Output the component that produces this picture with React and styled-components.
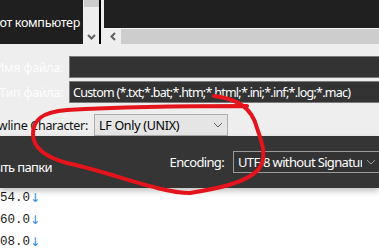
import React from 'react';
import styled, { createGlobalStyle } from 'styled-components';

const GlobalStyle = createGlobalStyle`
  html, body {
    margin: 0;
    padding: 0;
    background: #ffffff;
  }
  body {
    font-family: 'Noto Sans', 'Liberation Sans', sans-serif;
    letter-spacing: -0.3px;
  }
`;

const Page = styled.div`
  position: relative;
  width: 379px;
  height: 252px;
  overflow: hidden;
  display: flex;
  flex-direction: column;
  background: #eeeeee;
`;

const TopStrip = styled.div`
  display: flex;
  height: 44px;
  flex-shrink: 0;
`;

const TreePane = styled.div`
  width: 83px;
  background: #1f1f1f;
  display: flex;
  justify-content: flex-end;
  align-items: center;
  padding-right: 3px;
  box-sizing: border-box;
  overflow: hidden;
  color: #ffffff;
  font-size: 12.5px;
  white-space: nowrap;
`;

const VScroll = styled.div`
  width: 16px;
  background: #efefef;
  display: flex;
  flex-direction: column;
  justify-content: space-between;
  align-items: center;
`;

const VThumb = styled.div`
  width: 15px;
  height: 7px;
  background: #cdcdcd;
`;

const ScrollArrow = styled.svg`
  display: block;
  margin-bottom: 4px;
`;

const Divider = styled.div`
  width: 2px;
  background: #000000;
  margin-right: 3px;
`;

const ListPane = styled.div`
  flex: 1;
  display: flex;
  flex-direction: column;
`;

const ListBody = styled.div`
  height: 28px;
  background: #202020;
  border-bottom: 1px solid #f4f4f4;
`;

const HScroll = styled.div`
  flex: 1;
  display: flex;
  align-items: center;
  background: #efefef;
`;

const HArrowCell = styled.div`
  width: 17px;
  display: flex;
  justify-content: center;
`;

const HThumb = styled.div`
  flex: 1;
  align-self: stretch;
  background: #cdcdcd;
`;

const Form = styled.div`
  display: flex;
  flex-direction: column;
  padding-top: 12px;
  height: 96px;
  box-sizing: border-box;
  font-size: 12.5px;
`;

const Row = styled.div`
  display: flex;
  align-items: center;
  height: 22px;
  margin-bottom: ${(p) => p.gap || 0}px;
`;

const Label = styled.div`
  width: ${(p) => p.width}px;
  flex-shrink: 0;
  display: flex;
  justify-content: flex-end;
  white-space: nowrap;
  overflow: hidden;
  color: ${(p) => (p.dark ? '#111111' : '#fdfdfd')};
  margin-right: 6px;
`;

const TextField = styled.div`
  flex: 1;
  height: 22px;
  margin-right: -10px;
  box-sizing: border-box;
  background: #333333;
  border: 1px solid #7a7a7a;
  color: #ffffff;
  padding: 0 3px;
  display: flex;
  align-items: center;
  white-space: nowrap;
  overflow: hidden;
  letter-spacing: -0.75px;
`;

const Select = styled.div`
  width: ${(p) => p.width}px;
  height: 22px;
  box-sizing: border-box;
  display: flex;
  align-items: center;
  justify-content: space-between;
  padding: 0 4px 0 4px;
  margin-right: ${(p) => p.overhang || 0}px;
  background: ${(p) => (p.dark ? '#333333' : '#e5e5e5')};
  border: 1px solid ${(p) => (p.dark ? '#9a9a9a' : '#adadad')};
  color: ${(p) => (p.dark ? '#ffffff' : '#000000')};
  white-space: nowrap;
  overflow: hidden;
  flex-shrink: 0;
`;

const SelectText = styled.span`
  overflow: hidden;
  flex: 1;
`;

const Chevron = styled.svg`
  display: block;
  flex-shrink: 0;
  margin-left: 4px;
`;

const BottomBar = styled.div`
  position: relative;
  z-index: 1;
  height: 52px;
  flex-shrink: 0;
  background: #353535;
  display: flex;
  align-items: center;
  box-shadow: 0 3px 6px rgba(0, 0, 0, 0.25);
  font-size: 13px;
  letter-spacing: -0.65px;
  color: #ffffff;
`;

const ButtonText = styled.div`
  width: 52px;
  display: flex;
  justify-content: flex-end;
  white-space: nowrap;
  overflow: hidden;
  padding-top: 10px;
`;

const EncodingLabel = styled.div`
  margin-left: auto;
  margin-right: 9px;
  white-space: nowrap;
`;

const Editor = styled.div`
  flex: 1;
  background: #ffffff;
  margin-top: -1px;
  font-family: 'Liberation Mono', 'DejaVu Sans Mono', monospace;
  font-size: 12.5px;
  letter-spacing: 0;
  color: #1a1a1a;
`;

const CodeLine = styled.div`
  height: 22px;
  line-height: 22px;
  display: flex;
`;

const LineText = styled.div`
  width: 30px;
  display: flex;
  justify-content: flex-end;
  overflow: hidden;
  white-space: nowrap;
`;

const LineEnd = styled.span`
  color: #1e8ce6;
  font-family: 'DejaVu Sans', sans-serif;
  font-size: 12px;
`;

const Scribble = styled.svg`
  position: absolute;
  left: 0;
  top: 0;
  pointer-events: none;
  z-index: 5;
`;

const DownChevron = ({ color = '#606060' }) => (
  <Chevron width="10" height="6" viewBox="0 0 10 6">
    <path d="M1 1 L5 5 L9 1" fill="none" stroke={color} strokeWidth="1" />
  </Chevron>
);

const lines = ['54.0', '60.0', '08.0'];

const App = () => {
  return (
    <>
      <GlobalStyle />
      <Page>
        <TopStrip>
          <TreePane>Этот компьютер</TreePane>
          <VScroll>
            <VThumb />
            <ScrollArrow width="9" height="6" viewBox="0 0 9 6">
              <path d="M1 1 L4.5 4.5 L8 1" fill="none" stroke="#606060" strokeWidth="2" />
            </ScrollArrow>
          </VScroll>
          <Divider />
          <ListPane>
            <ListBody />
            <HScroll>
              <HArrowCell>
                <svg width="6" height="9" viewBox="0 0 6 9">
                  <path d="M5 1 L1.5 4.5 L5 8" fill="none" stroke="#606060" strokeWidth="2" />
                </svg>
              </HArrowCell>
              <HThumb />
            </HScroll>
          </ListPane>
        </TopStrip>

        <Form>
          <Row gap={3}>
            <Label width={63}>Имя файла:</Label>
            <TextField />
          </Row>
          <Row gap={11}>
            <Label width={63}>Тип файла:</Label>
            <TextField>Custom (*.txt;*.bat;*.htm;*.html;*.ini;*.inf;*.log;*.mac)</TextField>
          </Row>
          <Row>
            <Label width={88} dark>
              Newline Character:
            </Label>
            <Select width={134}>
              <SelectText>LF Only (UNIX)</SelectText>
              <DownChevron />
            </Select>
          </Row>
        </Form>

        <BottomBar>
          <ButtonText>Скрыть папки</ButtonText>
          <EncodingLabel>Encoding:</EncodingLabel>
          <Select width={148} overhang={-2} dark>
            <SelectText>UTF-8 without Signature</SelectText>
            <DownChevron color="#9a9a9a" />
          </Select>
        </BottomBar>

        <Editor>
          {lines.map((l) => (
            <CodeLine key={l}>
              <LineText>{l}</LineText>
              <LineEnd>↓</LineEnd>
            </CodeLine>
          ))}
        </Editor>

        <Scribble width="379" height="252" viewBox="0 0 379 252">
          <path
            d="M214 96 C238 99, 252 108, 257 128 C262 142, 268 158, 258 170 C245 183, 220 188, 190 193 C160 193, 110 172, 67 163 C45 157, 33 148, 33 134 C33 120, 42 112, 67 110 C120 107, 190 106, 247 106"
            fill="none"
            stroke="#e3141b"
            strokeWidth="4"
            strokeLinecap="round"
            strokeLinejoin="round"
          />
        </Scribble>
      </Page>
    </>
  );
};

export default App;
